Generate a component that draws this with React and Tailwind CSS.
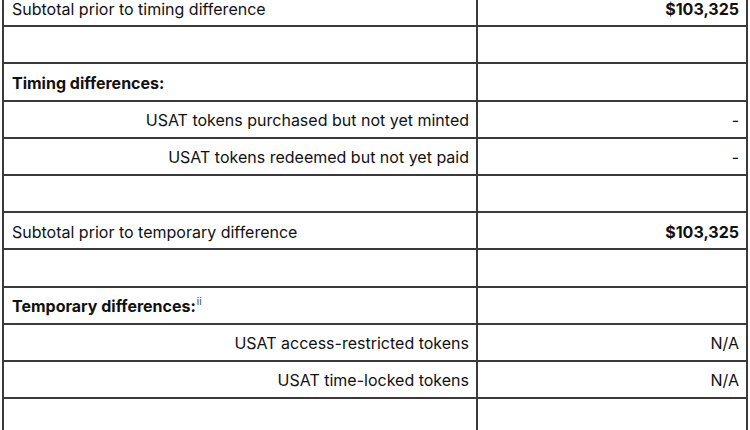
import React from 'react';

const rows = [
  { label: 'Subtotal prior to timing difference', value: '$103,325', boldValue: true },
  { label: '', value: '' },
  { label: 'Timing differences:', value: '', boldLabel: true },
  { label: 'USAT tokens purchased but not yet minted', value: '-', right: true },
  { label: 'USAT tokens redeemed but not yet paid', value: '-', right: true },
  { label: '', value: '' },
  { label: 'Subtotal prior to temporary difference', value: '$103,325', boldValue: true },
  { label: '', value: '' },
  { label: 'Temporary differences:', value: '', boldLabel: true, note: 'ii' },
  { label: 'USAT access-restricted tokens', value: 'N/A', right: true },
  { label: 'USAT time-locked tokens', value: 'N/A', right: true },
  { label: '', value: '' },
];

export default function App() {
  return (
    <div className="w-[750px] h-[430px] overflow-hidden bg-white" style={{ fontFamily: 'Inter, "Noto Sans", sans-serif' }}>
      <div className="-mt-[10px] ml-[2px] w-[746px] border-x-2 border-[#3a3a3a] text-[16px] text-[#111]">
        {rows.map((r, i) => (
          <div key={i} className="flex h-[37.2px] border-b-2 border-[#3a3a3a]">
            <div className={`w-[474px] shrink-0 border-r-2 border-[#3a3a3a] pl-2 pr-[7px] pt-[2px] flex items-center ${r.right ? 'justify-end' : 'justify-start'} ${r.boldLabel ? 'font-bold' : ''}`}>
              {r.label}
              {r.note && <sup className="text-[10px] font-normal text-[#444] ml-[1px] -top-[5px]">{r.note}</sup>}
            </div>
            <div className={`flex-1 pl-2 pr-[7px] pt-[2px] flex items-center justify-end ${r.boldValue ? 'font-bold' : ''}`}>
              {r.value}
            </div>
          </div>
        ))}
      </div>
    </div>
  );
}
